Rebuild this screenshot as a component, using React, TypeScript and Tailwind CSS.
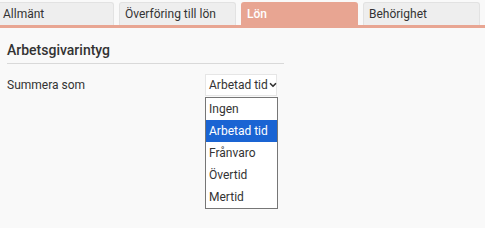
import { ChevronDown } from 'lucide-react';

const tabs = ['Allmänt', 'Överföring till lön', 'Lön', 'Behörighet'];
const options = ['Ingen', 'Arbetad tid', 'Frånvaro', 'Övertid', 'Mertid'];

export default function App() {
    const active = 'Lön';
    const selected = 'Arbetad tid';

    return (
        <div className="w-[485px] h-[228px] bg-[#f9f9f9] overflow-hidden text-[#333] font-['Roboto',sans-serif]">
            {/* Tabs */}
            <div className="flex gap-[5px] pt-[2px] pr-[5px] border-b-[3px] border-[#e8a592]">
                {tabs.map((tab, i) => (
                    <div
                        key={tab}
                        className={
                            (i === 0 ? 'ml-[-3px] ' : '') +
                            (tab === active
                                ? 'flex-1 h-[23px] flex items-center px-[6px] rounded-t-[3px] bg-[#e8a592] text-white text-[12px] font-medium'
                                : 'flex-1 h-[23px] flex items-center px-[5px] rounded-t-[3px] bg-[#eeeeee] border border-b-0 border-[#e2e2e2] text-[#333] text-[12px]')
                        }
                    >
                        {tab}
                    </div>
                ))}
            </div>

            <div className="px-[7px] pt-[14px]">
                <h3 className="text-[14px] font-medium text-[#333] leading-[16px] pb-[5px] border-b border-[#d9d9d9] w-[277px]">
                    Arbetsgivarintyg
                </h3>

                <div className="flex mt-[10px]">
                    <div className="w-[198px] text-[12px] text-[#333] pt-[2px]">Summera som</div>
                    <div className="flex flex-col">
                        <div className="w-[72px] h-[22px] flex items-center justify-between pl-[3px] pr-[2px] bg-white border border-[#e6e6e6] text-[12px] text-[#333] whitespace-nowrap">
                            <span>Arbetad tid</span>
                            <ChevronDown size={10} strokeWidth={4} className="shrink-0" />
                        </div>
                        <div className="mt-[1px] w-[73px] bg-white border border-[#767676] text-[12px]">
                            {options.map(opt => (
                                <div
                                    key={opt}
                                    className={
                                        opt === selected
                                            ? 'h-[22px] flex items-center px-[3px] bg-[#1a64d3] text-white'
                                            : 'h-[22px] flex items-center px-[3px] text-[#333]'
                                    }
                                >
                                    {opt}
                                </div>
                            ))}
                        </div>
                    </div>
                </div>
            </div>
        </div>
    );
}
